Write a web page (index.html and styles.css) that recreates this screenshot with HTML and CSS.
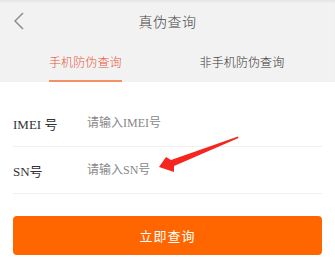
FILE: index.html
```html
<!DOCTYPE html>
<html lang="zh">

<head>
    <meta charset="UTF-8">
    <meta name="viewport" content="width=device-width, initial-scale=1.0">
    <title>真伪查询</title>

    <link rel="stylesheet" href="styles.css">
</head>

<body>

    <div class="page">
        <div class="top">
            <div class="navbar">
                <span class="navbar__back">
                    <svg width="12" height="18" viewBox="0 0 12 18">
                        <polyline points="10,1 2,9 10,17" fill="none" stroke="#888" stroke-width="1.4" />
                    </svg>
                </span>
                <span class="navbar__title">真伪查询</span>
            </div>
            <div class="tabs">
                <div class="tabs__item tabs__item--active">手机防伪查询</div>
                <div class="tabs__item">非手机防伪查询</div>
            </div>
        </div>

        <div class="form">
            <label class="form__row">
                <span class="form__label">IMEI 号</span>
                <input class="form__input" type="text" placeholder="请输入IMEI号">
            </label>
            <label class="form__row">
                <span class="form__label">SN号</span>
                <input class="form__input" type="text" placeholder="请输入SN号">
            </label>
        </div>

        <div class="actions">
            <button class="btn">立即查询</button>
        </div>

        <svg class="arrow" width="335" height="260" viewBox="0 0 335 260">
            <polygon points="238,136.5 238.5,138 174,166 174,172 159,167 166,157 171,160" fill="#f5261f" />
        </svg>
    </div>

</body>

</html>
```

FILE: styles.css
```css
* {
    box-sizing: border-box;
}

body {
    margin: 0;
    background: #fff;
    font-family: "Liberation Serif", "Noto Sans CJK SC", serif;
}

.page {
    position: relative;
    width: 335px;
    height: 260px;
    overflow: hidden;
}

.top {
    background: #f2f2f2;
    box-shadow: inset 0 3px 3px -2px #ddd;
}

.navbar {
    position: relative;
    display: flex;
    align-items: center;
    justify-content: center;
    height: 41px;
}

.navbar__back {
    position: absolute;
    left: 13px;
    top: 12px;
}

.navbar__title {
    font-size: 14px;
    font-weight: 300;
    color: #444;
    letter-spacing: 0.5px;
}

.tabs {
    display: flex;
    gap: 78px;
    height: 41px;
    padding-left: 49px;
}

.tabs__item {
    position: relative;
    display: flex;
    align-items: center;
    font-size: 12px;
    font-weight: 300;
    letter-spacing: 0.1px;
    color: #333;
}

.tabs__item--active {
    color: #e8573a;
}

.tabs__item--active::after {
    content: "";
    position: absolute;
    left: 0;
    right: 0;
    bottom: 0;
    height: 2px;
    background: #f39064;
}

.form {
    padding: 18px 13px 0;
}

.form__row {
    display: flex;
    align-items: center;
    height: 47px;
    border-bottom: 1px solid #f0f0f0;
}

.form__label {
    width: 74px;
    font-size: 13px;
    color: #333;
}

.form__input {
    flex: 1;
    border: 0;
    padding: 0;
    outline: none;
    font-family: inherit;
    font-size: 12px;
    background: transparent;
}

.form__input::placeholder {
    color: #888;
}

.actions {
    padding: 22px 13px 0;
}

.btn {
    display: block;
    width: 100%;
    height: 39px;
    border: 0;
    border-radius: 4px;
    background: #ff6600;
    color: #fff;
    font-family: inherit;
    font-size: 13px;
    letter-spacing: 1px;
}

.arrow {
    position: absolute;
    left: 0;
    top: 0;
    pointer-events: none;
}
```
